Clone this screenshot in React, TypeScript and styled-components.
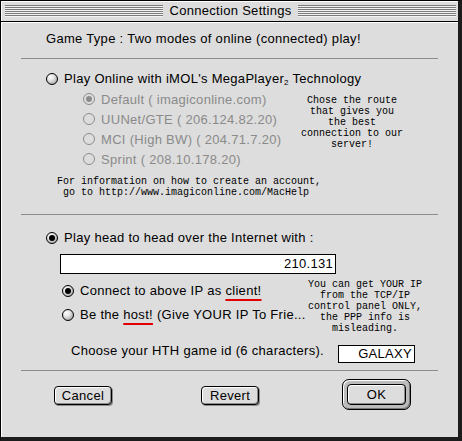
import React from 'react'
import styled, { createGlobalStyle, css } from 'styled-components'

const GlobalStyle = createGlobalStyle`
  html, body {
    margin: 0;
    padding: 0;
    background: #dddddd;
  }
`

const ui = `"Liberation Sans", Arial, sans-serif`
const mono = `"Liberation Mono", "DejaVu Sans Mono", monospace`

const Window = styled.div`
  box-sizing: border-box;
  width: 462px;
  height: 441px;
  border-top: 1px solid #000;
  border-left: 1px solid #000;
  border-right: 4px solid #1c1c1c;
  border-bottom: 4px solid #1c1c1c;
  background: #dddddd;
  font-family: ${ui};
  font-size: 13px;
  letter-spacing: 0.3px;
  color: #000;
  display: flex;
  flex-direction: column;
`

const TitleBar = styled.div`
  height: 20px;
  border-bottom: 1px solid #000;
  display: flex;
  align-items: center;
  gap: 6px;
  padding: 0 2px 0 4px;
  box-shadow: inset 1px 1px 0 #fff;
`

const Stripes = styled.div`
  flex: 1;
  height: 12px;
  background: repeating-linear-gradient(
    to bottom,
    #7a7a7a 0 1px,
    #f4f4f4 1px 2px
  );
`

const Title = styled.div`
  line-height: 20px;
  white-space: nowrap;
`

const Body = styled.div`
  flex: 1;
  padding: 9px 20px 0 20px;
  display: flex;
  flex-direction: column;
  box-shadow: inset 1px 1px 0 #fff;
`

const Line = styled.div<{ $indent?: number; $top?: number }>`
  display: flex;
  align-items: center;
  height: 16px;
  line-height: 16px;
  white-space: nowrap;
  margin-left: ${(p) => p.$indent ?? 0}px;
  margin-top: ${(p) => p.$top ?? 0}px;
`

const Separator = styled.div<{ $top: number }>`
  height: 1px;
  background: #8c8c8c;
  margin-top: ${(p) => p.$top}px;
`

const RadioDot = styled.span<{ $checked?: boolean; $disabled?: boolean }>`
  box-sizing: border-box;
  width: 12px;
  height: 12px;
  border-radius: 50%;
  flex: none;
  margin-right: 6px;
  position: relative;
  border: 1px solid ${(p) => (p.$disabled ? '#8c8c8c' : '#000')};
  background: ${(p) =>
    p.$disabled
      ? '#dddddd'
      : 'radial-gradient(circle at 35% 30%, #ffffff 0%, #e6e6e6 35%, #a8a8a8 80%, #777 100%)'};
  ${(p) =>
    p.$checked &&
    css`
      &::after {
        content: '';
        position: absolute;
        left: 2px;
        top: 2px;
        width: 6px;
        height: 6px;
        border-radius: 50%;
        background: ${p.$disabled ? '#8c8c8c' : '#000'};
      }
    `}
`

const Label = styled.span<{ $disabled?: boolean }>`
  color: ${(p) => (p.$disabled ? '#8a8a8a' : '#000')};
`

const Tiny = styled.span`
  font-size: 8px;
  line-height: 0;
  position: relative;
  top: 2px;
`

const Marked = styled.span`
  text-decoration: underline;
  text-decoration-color: #e00000;
  text-decoration-thickness: 2px;
  text-underline-offset: 4px;
`

const Radio = ({
  checked,
  disabled,
  children,
}: {
  checked?: boolean
  disabled?: boolean
  children: React.ReactNode
}) => (
  <>
    <RadioDot $checked={checked} $disabled={disabled} />
    <Label $disabled={disabled}>{children}</Label>
  </>
)

const SplitBlock = styled.div<{ $top: number }>`
  display: flex;
  margin-top: ${(p) => p.$top}px;
`

const OptionList = styled.div<{ $indent: number; $width: number }>`
  display: flex;
  flex-direction: column;
  flex: none;
  margin-left: ${(p) => p.$indent}px;
  width: ${(p) => p.$width}px;
`

const RouteRow = styled.div`
  display: flex;
  align-items: center;
  height: 20px;
  white-space: nowrap;
`

const Note = styled.div<{ $top: number; $width: number }>`
  font-family: ${mono};
  font-size: 10px;
  line-height: 11px;
  letter-spacing: 0;
  text-align: center;
  white-space: pre;
  width: ${(p) => p.$width}px;
  margin-top: ${(p) => p.$top}px;
`

const Info = styled.div`
  font-family: ${mono};
  font-size: 10px;
  line-height: 11px;
  letter-spacing: 0;
  white-space: pre;
  margin: 7px 0 0 36px;
`

const Field = styled.div<{ $width: number; $height: number; $indent: number; $top: number }>`
  box-sizing: border-box;
  width: ${(p) => p.$width}px;
  height: ${(p) => p.$height}px;
  margin-left: ${(p) => p.$indent}px;
  margin-top: ${(p) => p.$top}px;
  background: #fff;
  border: 1px solid #000;
  text-align: right;
  padding-right: 2px;
  line-height: ${(p) => p.$height - 2}px;
  flex: none;
`

const ChooseRow = styled.div`
  display: flex;
  align-items: center;
  margin-top: 8px;
  height: 20px;
`

const ChooseText = styled.span`
  margin-left: 50px;
  width: 267px;
  margin-top: -3px;
`

const ButtonRow = styled.div`
  display: flex;
  align-items: center;
  margin-top: 8px;
  height: 31px;
`

const Button = styled.div<{ $left: number }>`
  box-sizing: border-box;
  width: 58px;
  height: 19px;
  margin-left: ${(p) => p.$left}px;
  border: 1px solid #000;
  border-radius: 4px;
  background: #dddddd;
  box-shadow: inset 1px 1px 0 #fff, inset -1px -1px 0 #8c8c8c, 1px 1px 0 #8c8c8c;
  text-align: center;
  line-height: 17px;
  margin-top: 1px;
`

const DefaultRing = styled.div`
  box-sizing: border-box;
  width: 69px;
  height: 31px;
  margin-left: 83px;
  border: 1px solid #000;
  border-radius: 7px;
  background: #bcbcbc;
  box-shadow: inset 1px 1px 0 #fff, inset -1px -1px 0 #777;
  padding: 4px;
  display: flex;
`

const DefaultButton = styled.div`
  flex: 1;
  border: 1px solid #000;
  border-radius: 4px;
  background: #dddddd;
  box-shadow: inset 1px 1px 0 #fff, inset -1px -1px 0 #8c8c8c;
  text-align: center;
  line-height: 19px;
`

export default function App() {
  return (
    <>
      <GlobalStyle />
      <Window>
        <TitleBar>
          <Stripes />
          <Title>Connection Settings</Title>
          <Stripes />
        </TitleBar>
        <Body>
          <Line $indent={25}>Game Type : Two modes of online (connected) play!</Line>
          <Separator $top={11} />
          <Line $indent={25} $top={12}>
            <Radio>
              Play Online with iMOL's MegaPlayer<Tiny>2</Tiny> Technology
            </Radio>
          </Line>
          <SplitBlock $top={2}>
            <OptionList $indent={62} $width={199}>
              <RouteRow>
                <Radio checked disabled>Default ( imagiconline.com)</Radio>
              </RouteRow>
              <RouteRow>
                <Radio disabled>UUNet/GTE ( 206.124.82.20)</Radio>
              </RouteRow>
              <RouteRow>
                <Radio disabled>MCI (High BW) ( 204.71.7.20)</Radio>
              </RouteRow>
              <RouteRow>
                <Radio disabled>Sprint ( 208.10.178.20)</Radio>
              </RouteRow>
            </OptionList>
            <Note $top={6} $width={140}>
              {'Chose the route\nthat gives you\nthe best\nconnection to our\nserver!'}
            </Note>
          </SplitBlock>
          <Info>{'For information on how to create an account,\n go to http://www.imagiconline.com/MacHelp'}</Info>
          <Separator $top={16} />
          <Line $indent={25} $top={15}>
            <Radio checked>Play head to head over the Internet with :</Radio>
          </Line>
          <Field $width={276} $height={20} $indent={39} $top={8}>
            210.131
          </Field>
          <SplitBlock $top={2}>
            <OptionList $indent={41} $width={238}>
              <Line $top={7}>
                <Radio checked>
                  Connect to above IP as <Marked>client!</Marked>
                </Radio>
              </Line>
              <Line $top={8}>
                <Radio>
                  Be the <Marked>host!</Marked> (Give YOUR IP To Frie...
                </Radio>
              </Line>
            </OptionList>
            <Note $top={3} $width={130}>
              {'You can get YOUR IP\nfrom the TCP/IP\ncontrol panel ONLY,\nthe PPP info is\nmisleading.'}
            </Note>
          </SplitBlock>
          <ChooseRow>
            <ChooseText>Choose your HTH game id (6 characters).</ChooseText>
            <Field $width={77} $height={18} $indent={0} $top={4}>
              GALAXY
            </Field>
          </ChooseRow>
          <Separator $top={8} />
          <ButtonRow>
            <Button $left={33}>Cancel</Button>
            <Button $left={89}>Revert</Button>
            <DefaultRing>
              <DefaultButton>OK</DefaultButton>
            </DefaultRing>
          </ButtonRow>
        </Body>
      </Window>
    </>
  )
}
